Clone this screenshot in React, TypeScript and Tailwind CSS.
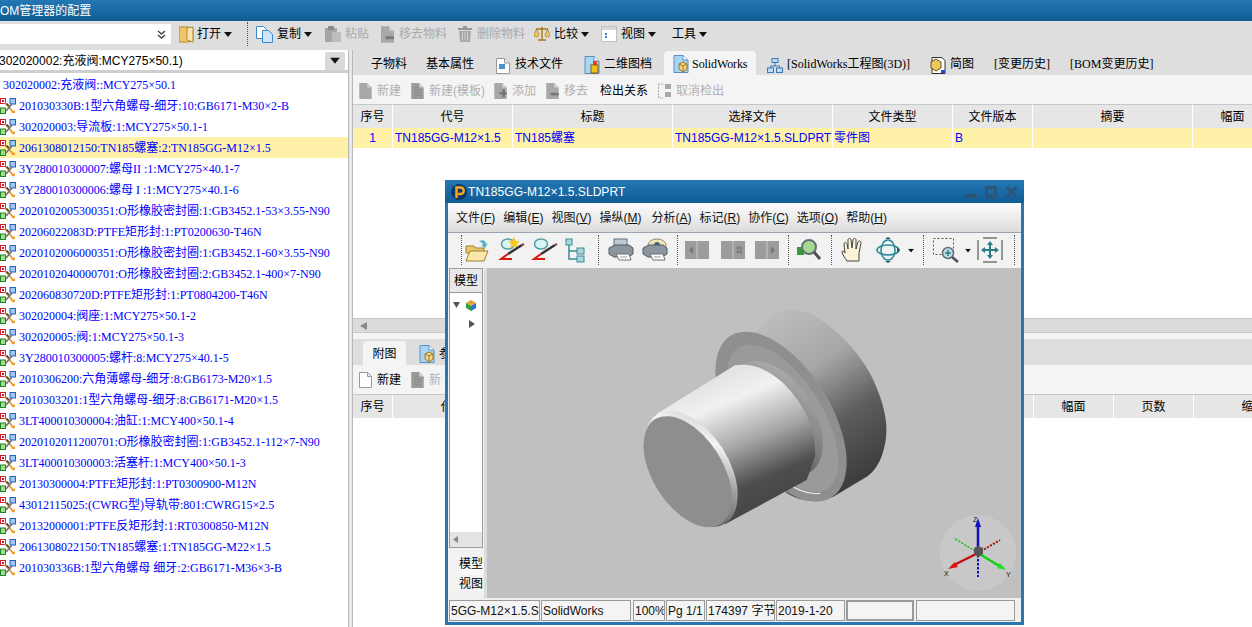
import React from "react";

const CJK = "font-['Liberation_Sans','Noto_Sans_CJK_SC',sans-serif]";
const SERIF = "font-['Liberation_Serif','Noto_Sans_CJK_SC',serif]";

const rows = [
  "201030330B:1型六角螺母-细牙:10:GB6171-M30×2-B",
  "302020003:导流板:1:MCY275×50.1-1",
  "2061308012150:TN185螺塞:2:TN185GG-M12×1.5",
  "3Y280010300007:螺母II :1:MCY275×40.1-7",
  "3Y280010300006:螺母 I :1:MCY275×40.1-6",
  "2020102005300351:O形橡胶密封圈:1:GB3452.1-53×3.55-N90",
  "20206022083D:PTFE矩形封:1:PT0200630-T46N",
  "2020102006000351:O形橡胶密封圈:1:GB3452.1-60×3.55-N90",
  "2020102040000701:O形橡胶密封圈:2:GB3452.1-400×7-N90",
  "202060830720D:PTFE矩形封:1:PT0804200-T46N",
  "302020004:阀座:1:MCY275×50.1-2",
  "302020005:阀:1:MCY275×50.1-3",
  "3Y280010300005:螺杆:8:MCY275×40.1-5",
  "2010306200:六角薄螺母-细牙:8:GB6173-M20×1.5",
  "2010303201:1型六角螺母-细牙:8:GB6171-M20×1.5",
  "3LT400010300004:油缸:1:MCY400×50.1-4",
  "2020102011200701:O形橡胶密封圈:1:GB3452.1-112×7-N90",
  "3LT400010300003:活塞杆:1:MCY400×50.1-3",
  "20130300004:PTFE矩形封:1:PT0300900-M12N",
  "43012115025:(CWRG型)导轨带:801:CWRG15×2.5",
  "20132000001:PTFE反矩形封:1:RT0300850-M12N",
  "2061308022150:TN185螺塞:1:TN185GG-M22×1.5",
  "201030336B:1型六角螺母 细牙:2:GB6171-M36×3-B",
];

function Caret({ className = "" }: { className?: string }) {
  return (
    <svg width="8" height="5" viewBox="0 0 8 5" className={className}>
      <path d="M0 0h8L4 5z" fill="#111" />
    </svg>
  );
}

function TreeIcon() {
  return (
    <svg width="16" height="16" viewBox="0 0 16 16" className="shrink-0">
      <rect x="0.5" y="0.5" width="5" height="5" fill="#fff" stroke="#d02030" />
      <rect x="2" y="2" width="2" height="2" fill="#d02030" />
      <rect x="10" y="0.5" width="5.500" height="5.500" fill="#9fc8f0" stroke="#2a60c0" />
      <rect x="0.5" y="10" width="5" height="5.500" fill="#a0e080" stroke="#208030" />
      <path d="M5 5l9 10" stroke="#e09020" strokeWidth="1.600" />
      <path d="M12 6L6 13" stroke="#707070" strokeWidth="1.600" />
      <path d="M6.500 5.500L9 8" stroke="#404040" strokeWidth="1.600" />
      <path d="M11 15h4v-3z" fill="#f0a030" />
    </svg>
  );
}

function Doc({ c = "#a8a8a8", w = 14, h = 18, minus = false, plus = false, lines = false }: { c?: string; w?: number; h?: number; minus?: boolean; plus?: boolean; lines?: boolean }) {
  return (
    <svg width={w} height={h} viewBox="0 0 14 18" className="shrink-0">
      <path d="M0 0h9l5 5v13H0z" fill={c} />
      <path d="M9 0v5h5z" fill="#d4d4d4" />
      {minus && <rect x="5" y="11" width="9" height="3" fill="#777" />}
      {plus && <path d="M6 10h3V7h3v3h2v3h-2v3H9v-3H6z" fill="#777" />}
      {lines && <path d="M3 5h6M3 8h8M3 11h8M3 14h8" stroke="#8a8a8a" />}
    </svg>
  );
}

function BlueDoc({ cube = false }: { cube?: boolean }) {
  return (
    <svg width="16" height="18" viewBox="0 0 16 18" className="shrink-0">
      <path d="M1 .5h9l5 4.500v12.500H1z" fill="#a9d4f2" stroke="#5a90c0" />
      <path d="M10 .5V5h5" fill="#fff" stroke="#5a90c0" />
      {cube ? (
        <g>
          <path d="M6 9l4-2 4 2v5l-4 3-4-3z" fill="#f0d48c" stroke="#a07820" />
          <path d="M6 9l4 2 4-2M10 11v6" fill="none" stroke="#a07820" />
        </g>
      ) : (
        <g>
          <rect x="7" y="9" width="7" height="8" fill="#f0c020" stroke="#806010" />
          <rect x="9" y="5" width="4" height="4" fill="#e04020" />
        </g>
      )}
    </svg>
  );
}

function WhiteDoc() {
  return (
    <svg width="14" height="16" viewBox="0 0 14 16" className="shrink-0">
      <path d="M.5.500h8l5 4.500v10.500H.5z" fill="#fff" stroke="#9a9a9a" />
      <path d="M8.500.500V5h5" fill="#e8e8e8" stroke="#9a9a9a" />
      <rect x="3" y="6" width="6" height="5" fill="#4f92d0" />
    </svg>
  );
}

function Sep({ h = 26 }: { h?: number }) {
  return <div className="border-l border-dotted border-[#555]" style={{ height: h }} />;
}

function TopToolbar() {
  return (
    <div className={`flex h-[29px] items-center bg-[#dedede] pb-[3px] text-[12px] ${CJK}`}>
      <div className="flex h-[20px] w-[171px] items-center justify-end bg-white pr-[5px]">
        <svg width="9" height="9" viewBox="0 0 9 9">
          <path d="M1 1l3.500 3L8 1M1 5l3.500 3L8 5" fill="none" stroke="#444" strokeWidth="1.400" />
        </svg>
      </div>
      <svg width="15" height="17" viewBox="0 0 15 17" className="ml-[8px]">
        <path d="M0 1h9l5 1v13l-5 1H0z" fill="#f0c468" stroke="#b08a30" />
        <path d="M8 2l6-1v15l-6-2z" fill="#f9e6ac" stroke="#b08a30" />
      </svg>
      <span className="ml-[3px] text-black">打开</span>
      <Caret className="ml-[3px]" />
      <div className="ml-[15px]"><Sep h={24} /></div>
      <svg width="17" height="17" viewBox="0 0 17 17" className="ml-[8px]">
        <path d="M.5.500h7l3 3v9H.5z" fill="#fff" stroke="#3a88d0" />
        <path d="M6.500 4.500h6l4 4v8h-10z" fill="#cfe6fa" stroke="#3a88d0" />
      </svg>
      <span className="ml-[4px] text-black">复制</span>
      <Caret className="ml-[3px]" />
      <svg width="16" height="16" viewBox="0 0 16 16" className="ml-[13px]">
        <rect x="0" y="2" width="12" height="14" fill="#a6a6a6" />
        <rect x="3" y="0" width="6" height="4" fill="#8a8a8a" />
        <rect x="7" y="6" width="9" height="10" fill="#bdbdbd" />
      </svg>
      <span className="ml-[4px] text-[#aaa]">粘贴</span>
      <div className="ml-[12px]"><Doc w={13} h={17} minus /></div>
      <span className="ml-[5px] text-[#aaa]">移去物料</span>
      <svg width="14" height="16" viewBox="0 0 14 16" className="ml-[11px]">
        <path d="M5 0h4v2h5v2H0V2h5z" fill="#999" />
        <path d="M1 5h12l-1 11H2z" fill="#a8a8a8" />
        <path d="M4.500 6.500v8M7 6.500v8M9.500 6.500v8" stroke="#d0d0d0" />
      </svg>
      <span className="ml-[5px] text-[#aaa]">删除物料</span>
      <svg width="16" height="16" viewBox="0 0 16 16" className="ml-[9px]">
        <path d="M8 1v13M2 3h12M4 14h8" stroke="#a87818" strokeWidth="1.400" fill="none" />
        <path d="M0 9l2.500-6L5 9a2.500 2 0 0 1-5 0zM11 9l2.500-6L16 9a2.500 2 0 0 1-5 0z" fill="#efc860" stroke="#a87818" strokeWidth=".7" />
      </svg>
      <span className="ml-[4px] text-black">比较</span>
      <Caret className="ml-[3px]" />
      <svg width="16" height="16" viewBox="0 0 16 16" className="ml-[12px]">
        <rect x=".5" y=".5" width="15" height="15" fill="#fff" stroke="#c0c0c0" />
        <rect x="1" y="1" width="14" height="3" fill="#d8d8d8" />
        <rect x="4" y="7" width="2" height="2" fill="#3a80d0" />
        <rect x="4" y="10" width="2" height="2" fill="#3a80d0" />
      </svg>
      <span className="ml-[4px] text-black">视图</span>
      <Caret className="ml-[3px]" />
      <span className="ml-[16px] text-black">工具</span>
      <Caret className="ml-[3px]" />
    </div>
  );
}

function LeftPanel() {
  return (
    <div className="flex w-[348px] shrink-0 flex-col bg-white">
      <div className={`flex h-[23px] items-center justify-between border-b-[3px] border-[#cfcfcf] pr-[3px] pt-[1px] text-[12px] text-black ${CJK}`}>
        <span className="ml-[-1px]">302020002:充液阀:MCY275×50.1)</span>
        <div className="flex h-[18px] w-[20px] items-center justify-center rounded-[2px] bg-[#d9d9d9]">
          <Caret className="scale-125" />
        </div>
      </div>
      <div className={`flex flex-col pt-[1px] text-[12px] text-[#0000ff] ${SERIF}`}>
        <div className="flex h-[21px] items-center pl-[3px]">302020002:充液阀::MCY275×50.1</div>
        {rows.map((r, i) => (
          <div key={i} className={`flex h-[21px] items-center whitespace-pre ${i === 2 ? "bg-[#fff2a8]" : ""}`}>
            <TreeIcon />
            <span className="ml-[3px]">{r}</span>
          </div>
        ))}
      </div>
    </div>
  );
}

function Tabs() {
  const gap = "ml-[20px]";
  return (
    <div className={`flex h-[25px] items-end bg-[#dedede] text-[12px] text-black ${CJK}`}>
      <span className="mb-[2px] ml-[18px]">子物料</span>
      <span className="mb-[2px] ml-[19px]">基本属性</span>
      <div className="mb-[1px] ml-[22px]"><WhiteDoc /></div>
      <span className="mb-[2px] ml-[5px]">技术文件</span>
      <div className="mb-[1px] ml-[21px]"><BlueDoc /></div>
      <span className="mb-[2px] ml-[4px]">二维图档</span>
      <div className={`ml-[12px] flex h-[24px] w-[92px] items-center rounded-t-[4px] bg-[#f4f4f4] pl-[9px] pt-[1px] ${SERIF}`}>
        <BlueDoc cube />
        <span className="ml-[3px] tracking-[-0.1px]">SolidWorks</span>
      </div>
      <svg width="16" height="15" viewBox="0 0 16 15" className="mb-[2px] ml-[11px]">
        <rect x="5" y=".5" width="6" height="4" fill="#bcdcf6" stroke="#3a78b8" />
        <rect x=".5" y="10" width="6" height="4.500" fill="#bcdcf6" stroke="#3a78b8" />
        <rect x="9.500" y="10" width="6" height="4.500" fill="#bcdcf6" stroke="#3a78b8" />
        <path d="M8 5v3M3.500 10V8h9v2" stroke="#3a78b8" fill="none" />
      </svg>
      <span className={`mb-[2px] ml-[4px] ${SERIF}`}>[SolidWorks工程图(3D)]</span>
      <svg width="16" height="17" viewBox="0 0 16 17" className="mb-[1px] ml-[20px]">
        <path d="M2 .5h10l3 3v13H2z" fill="#fff" stroke="#333" />
        <path d="M1 5l5-3 5 3v6l-5 3-5-3z" fill="#e8c860" stroke="#705010" />
        <path d="M11 13h4v3h-4z" fill="#2050c0" />
      </svg>
      <span className="mb-[2px] ml-[4px]">简图</span>
      <span className={`mb-[2px] ${gap} ${SERIF}`}>[变更历史]</span>
      <span className={`mb-[2px] ${gap} ${SERIF}`}>[BOM变更历史]</span>
    </div>
  );
}

function GrayBar() {
  const t = "text-[#b0b0b0]";
  return (
    <div className={`flex h-[29px] items-center bg-[#f4f4f4] pl-[6px] pt-[2px] text-[12px] ${CJK}`}>
      <Doc w={13} h={16} />
      <span className={`ml-[5px] ${t}`}>新建</span>
      <div className="ml-[10px]"><Doc w={13} h={16} c="#9a9a9a" lines /></div>
      <span className={`ml-[5px] ${t}`}>新建(模板)</span>
      <div className="ml-[9px]"><Doc w={13} h={16} plus /></div>
      <span className={`ml-[5px] ${t}`}>添加</span>
      <div className="ml-[10px]"><Doc w={13} h={16} minus /></div>
      <span className={`ml-[5px] ${t}`}>移去</span>
      <span className="ml-[12px] text-black">检出关系</span>
      <svg width="13" height="16" viewBox="0 0 13 16" className="ml-[10px]">
        <path d="M.5 1h5M.5 1v14h5" fill="none" stroke="#aaa" strokeDasharray="2 1" />
        <rect x="7" y="1" width="6" height="5" fill="#a8a8a8" />
        <rect x="7" y="9" width="6" height="5" fill="#a8a8a8" />
      </svg>
      <span className={`ml-[5px] ${t}`}>取消检出</span>
    </div>
  );
}

const cols: [string, number][] = [
  ["序号", 40], ["代号", 120], ["标题", 160], ["选择文件", 160], ["文件类型", 120], ["文件版本", 80], ["摘要", 160], ["幅面", 80],
];

function HeaderRow({ items }: { items: [string, number][] }) {
  return (
    <div className={`flex h-[24px] border-t border-[#c8c8c8] bg-[#e6e6e6] text-[12px] text-black ${CJK}`}>
      {items.map(([n, w], i) => (
        <div key={i} style={{ width: w }} className="flex shrink-0 items-center justify-center whitespace-nowrap border-r border-white">{n}</div>
      ))}
    </div>
  );
}

function UpperTable() {
  const row: [string, number, string][] = [
    ["1", 40, "justify-center"],
    ["TN185GG-M12×1.5", 120, "pl-[2px]"],
    ["TN185螺塞", 160, "pl-[2px]"],
    ["TN185GG-M12×1.5.SLDPRT", 160, "pl-[2px]"],
    ["零件图", 120, "pl-[1px]"],
    ["B", 80, "pl-[2px]"],
    ["", 160, ""],
    ["", 80, ""],
  ];
  return (
    <div className="flex h-[214px] flex-col bg-white">
      <HeaderRow items={cols} />
      <div className={`flex h-[20px] bg-[#fff2a8] text-[12px] text-[#0000ff] ${CJK}`}>
        {row.map(([n, w, c], i) => (
          <div key={i} style={{ width: w }} className={`flex shrink-0 items-center overflow-hidden whitespace-nowrap border-r border-white ${c}`}>{n}</div>
        ))}
      </div>
    </div>
  );
}

function RightPanel() {
  return (
    <div className="flex min-w-0 flex-1 flex-col overflow-hidden bg-white">
      <Tabs />
      <GrayBar />
      <UpperTable />
      <div className="flex h-[15px] items-center border-y border-[#c8c8c8] bg-[#dcdcdc] pl-[7px]">
        <svg width="7" height="8" viewBox="0 0 7 8"><path d="M7 0v8L0 4z" fill="#888" /></svg>
      </div>
      <div className="h-[6px] bg-[#f4f4f4]" />
      <div className={`flex h-[26px] items-end bg-[#dedede] pl-[10px] text-[12px] text-black ${CJK}`}>
        <div className="flex h-[24px] w-[43px] items-center justify-center rounded-t-[4px] bg-[#f4f4f4] pt-[2px]">附图</div>
        <div className="mb-[2px] ml-[13px]"><BlueDoc cube /></div>
        <span className="mb-[2px] ml-[4px]">参</span>
      </div>
      <div className={`flex h-[29px] items-center bg-[#f4f4f4] pl-[6px] pt-[1px] text-[12px] ${CJK}`}>
        <svg width="13" height="16" viewBox="0 0 13 16">
          <path d="M.5.500h8l4 4v11H.5z" fill="#fff" stroke="#999" />
          <path d="M8.500.500v4h4" fill="none" stroke="#999" />
        </svg>
        <span className="ml-[5px] text-black">新建</span>
        <div className="ml-[10px]"><Doc w={13} h={16} c="#9a9a9a" lines /></div>
        <span className="ml-[5px] text-[#b0b0b0]">新</span>
      </div>
      <HeaderRow items={[["序号", 40], ["代号", 120], ["", 521], ["幅面", 80], ["页数", 80], ["缩", 108]]} />
    </div>
  );
}

function Model() {
  return (
    <svg width="280" height="280" viewBox="0 0 840 840" className="absolute left-[133px] top-[22px]">
      <defs>
        <linearGradient id="rim" gradientUnits="userSpaceOnUse" x1="480" y1="60" x2="790" y2="540">
          <stop offset="0" stopColor="#bdbdbd" />
          <stop offset="0.35" stopColor="#a6a6a6" />
          <stop offset="0.65" stopColor="#5e5e5e" />
          <stop offset="1" stopColor="#3a3a3a" />
        </linearGradient>
        <linearGradient id="body" gradientUnits="userSpaceOnUse" x1="300" y1="260" x2="450" y2="620">
          <stop offset="0" stopColor="#e4e4e4" />
          <stop offset="0.2" stopColor="#f1f1f1" />
          <stop offset="0.55" stopColor="#a4a4a4" />
          <stop offset="0.85" stopColor="#4e4e4e" />
          <stop offset="1" stopColor="#484848" />
        </linearGradient>
        <linearGradient id="bevel" gradientUnits="userSpaceOnUse" x1="130" y1="350" x2="350" y2="700">
          <stop offset="0" stopColor="#b8b8b8" />
          <stop offset="0.25" stopColor="#f4f4f4" />
          <stop offset="0.5" stopColor="#a0a0a0" />
          <stop offset="0.85" stopColor="#555555" />
          <stop offset="1" stopColor="#2e2e2e" />
        </linearGradient>
        <linearGradient id="neck" gradientUnits="userSpaceOnUse" x1="450" y1="240" x2="610" y2="500">
          <stop offset="0" stopColor="#a8a8a8" />
          <stop offset="0.6" stopColor="#7a7a7a" />
          <stop offset="1" stopColor="#4a4a4a" />
        </linearGradient>
      </defs>
      <path d="M292 240L470 65Q520 50 570 70Q680 130 750 250Q810 370 797 450Q785 530 740 560L640 620Q570 650 500 610Z" fill="url(#rim)" />
      <ellipse cx="483" cy="380" rx="286" ry="148" transform="rotate(58 483 380)" fill="#8f8f8f" />
      <ellipse cx="490" cy="378" rx="262" ry="132" transform="rotate(58 490 378)" fill="#8f8f8f" stroke="#f0f0f0" strokeWidth="3" strokeDasharray="470 1200" strokeDashoffset="-30" />
      <ellipse cx="488" cy="385" rx="250" ry="120" transform="rotate(58 488 385)" fill="#9a9a9a" />
      <ellipse cx="470" cy="385" rx="190" ry="112" transform="rotate(58 470 385)" fill="url(#neck)" />
      <path d="M111 371L345 226Q420 215 490 280Q590 380 585 500L560 570L315 703Z" fill="url(#body)" />
      <ellipse cx="213" cy="537" rx="193" ry="113" transform="rotate(58 213 537)" fill="url(#bevel)" />
      <ellipse cx="203" cy="545" rx="185" ry="105" transform="rotate(58 203 545)" fill="#8e8e8e" />
    </svg>
  );
}

function Triad() {
  return (
    <svg width="80" height="80" viewBox="0 0 80 80" className="absolute left-[451px] top-[245px]">
      <circle cx="40" cy="40" r="38" fill="#c8c8c8" />
      <path d="M40 40V12" stroke="#1010b0" strokeWidth="2.500" />
      <path d="M40 5l-3 9h6z" fill="#1010c0" />
      <path d="M40 42v22" stroke="#1010b0" strokeWidth="2" strokeDasharray="2.500 1.500" />
      <path d="M40 40L14 53" stroke="#c01010" strokeWidth="2.500" />
      <path d="M10 56l7-7 3 5z" fill="#e01010" />
      <path d="M40 40l22-13" stroke="#a01010" strokeWidth="2" strokeDasharray="2 1.500" />
      <path d="M40 40l23 14" stroke="#10d010" strokeWidth="2.500" />
      <path d="M68 57l-9-2 3-5z" fill="#20e020" />
      <path d="M40 40L16 25" stroke="#10c010" strokeWidth="1.500" strokeDasharray="2 1.500" />
      <path d="M36 35l4-2 5 2v6l-5 3-4-3z" fill="#555" />
      <text x="35" y="9" fontSize="7" fill="#111" fontFamily="Liberation Sans">Z</text>
      <text x="6" y="63" fontSize="7" fill="#111" fontFamily="Liberation Sans">X</text>
      <text x="68" y="64" fontSize="7" fill="#111" fontFamily="Liberation Sans">Y</text>
    </svg>
  );
}

function M({ a, k, className = "" }: { a: string; k: string; className?: string }) {
  return (
    <span className={className}>
      {a}(<u>{k}</u>)
    </span>
  );
}

function PageBtn({ kind }: { kind: "l" | "m" | "r" }) {
  return (
    <svg width="24" height="18" viewBox="0 0 24 18">
      <rect width="24" height="18" fill="#9c9c9c" />
      <path d="M12 0v18" stroke="#c8c8c8" />
      {kind === "l" && <path d="M8 5v8L4 9z" fill="#777" />}
      {kind === "m" && <path d="M15 7h6M15 11h6M17 5v8M20 5v8" stroke="#777" />}
      {kind === "r" && <path d="M16 5v8l4-4z" fill="#777" />}
    </svg>
  );
}

function Pen({ star = false }: { star?: boolean }) {
  return (
    <svg width="28" height="26" viewBox="0 0 28 26">
      <ellipse cx="10" cy="7" rx="6.500" ry="5" fill="#d8f4f4" stroke="#50a0a0" strokeWidth="1.500" />
      {star && <path d="M16 0l2 4 4 0-3 3 1 4-4-2-4 2 1-4-3-3 4 0z" fill="#f8c820" />}
      <path d="M10 17L24 8" stroke="#333" strokeWidth="2.500" />
      <path d="M24 8l2-1" stroke="#a04040" strokeWidth="2.500" />
      <path d="M10 17l-7 5h11" fill="none" stroke="#d81808" strokeWidth="2" />
    </svg>
  );
}

function Printer({ eye = false }: { eye?: boolean }) {
  return (
    <svg width="26" height="24" viewBox="0 0 26 24">
      {eye && <ellipse cx="15" cy="7" rx="9" ry="6" fill="#f0e8b8" stroke="#8a8a70" />}
      {eye && <circle cx="15" cy="7" r="3" fill="#406878" />}
      {!eye && <rect x="6" y="1" width="13" height="7" fill="#c0c8d0" stroke="#607080" />}
      <path d="M1 10l6-3h14l4 3v6l-5 3H6l-5-3z" fill="#8c969e" stroke="#505a62" />
      <path d="M8 16h13l2 6H11z" fill="#fff" stroke="#707070" />
      <path d="M12 19h7" stroke="#999" />
    </svg>
  );
}

function WinToolbar() {
  return (
    <div className="flex h-[36px] shrink-0 items-center bg-[#f2f2f2] shadow-[inset_0_1px_0_#9aa4ae]">
      <div className="ml-[13px]"><Sep h={30} /></div>
      <svg width="26" height="25" viewBox="0 0 26 25" className="ml-[1px]">
        <path d="M16 3c4-2 7 0 7 3l2-1-3 5-4-3 2 0c0-2-2-3-4-4z" fill="#50b0c8" />
        <path d="M3 8h8l2 2h8v5H3z" fill="#e8c868" stroke="#a08030" />
        <path d="M3 23L7 13h18l-4 10z" fill="#fbe8a8" stroke="#a08030" />
      </svg>
      <div className="ml-[9px]"><Pen star /></div>
      <div className="ml-[5px]"><Pen /></div>
      <svg width="20" height="25" viewBox="0 0 20 25" className="ml-[6px]">
        <rect x="1" y="1" width="6" height="6" fill="#a8d8dc" stroke="#3a8a96" />
        <rect x="12" y="10" width="7" height="6" fill="#a8d8dc" stroke="#3a8a96" />
        <rect x="12" y="18" width="7" height="6" fill="#a8d8dc" stroke="#3a8a96" />
        <path d="M4 7v14h8M4 13h8" fill="none" stroke="#3a8a96" strokeWidth="1.500" />
      </svg>
      <div className="ml-[13px]"><Sep h={30} /></div>
      <div className="ml-[9px]"><Printer /></div>
      <div className="ml-[8px]"><Printer eye /></div>
      <div className="ml-[9px]"><Sep h={30} /></div>
      <div className="ml-[7px]"><PageBtn kind="l" /></div>
      <div className="ml-[12px]"><PageBtn kind="m" /></div>
      <div className="ml-[10px]"><PageBtn kind="r" /></div>
      <div className="ml-[9px]"><Sep h={30} /></div>
      <svg width="26" height="24" viewBox="0 0 26 24" className="ml-[7px]">
        <rect x="1" y="9" width="7" height="8" fill="#3a9a3a" />
        <circle cx="13" cy="9" r="7" fill="#a8d890" stroke="#607078" strokeWidth="2" />
        <path d="M18 14l6 7" stroke="#505050" strokeWidth="3" />
      </svg>
      <div className="ml-[9px]"><Sep h={30} /></div>
      <svg width="24" height="25" viewBox="0 0 24 25" className="ml-[9px]">
        <path d="M6 23c-2-3-5-7-5-9s2-1 3 1L3 6c0-2 2-2 3 0l1 5 0-9c0-2 3-2 3 0l1 8 1-8c0-2 3-2 3 0l0 9 2-7c1-2 3-1 3 1l-2 10 0 8z" fill="#fbf4d8" stroke="#444" />
      </svg>
      <svg width="24" height="26" viewBox="0 0 24 26" className="ml-[11px]">
        <ellipse cx="12" cy="13" rx="7" ry="10" fill="none" stroke="#2a8a96" strokeWidth="1.500" />
        <ellipse cx="12" cy="13" rx="11" ry="5" fill="none" stroke="#2a8a96" strokeWidth="1.500" />
        <path d="M9 2h6l-3-2zM9 24h6l-3 2zM21 10l3 3-3 3z" fill="#1a5a66" />
      </svg>
      <Caret className="ml-[7px] scale-75" />
      <div className="ml-[8px]"><Sep h={30} /></div>
      <svg width="26" height="25" viewBox="0 0 26 25" className="ml-[9px]">
        <rect x=".5" y=".5" width="20" height="16" fill="none" stroke="#555" strokeDasharray="2 2" />
        <circle cx="15" cy="15" r="5.500" fill="#c0e0e8" stroke="#607078" strokeWidth="1.500" />
        <path d="M12 15h6M15 12v6" stroke="#2a7a86" strokeWidth="1.500" />
        <path d="M19 19l6 5" stroke="#505050" strokeWidth="2.500" />
      </svg>
      <Caret className="ml-[5px] scale-75" />
      <svg width="26" height="26" viewBox="0 0 26 26" className="ml-[5px]">
        <path d="M1 3v20M25 3v20" stroke="#777" strokeWidth="1.500" />
        <path d="M6 1h14M6 25h14" stroke="#777" strokeWidth="1.500" />
        <path d="M13 4l3 4h-2v4h4v-2l4 3-4 3v-2h-4v4h2l-3 4-3-4h2v-4H8v2l-4-3 4-3v2h4V8h-2z" fill="#2a7a8a" />
      </svg>
      <div className="ml-[11px]"><Sep h={30} /></div>
    </div>
  );
}

function Window() {
  const field = "flex h-[21px] shrink-0 items-center overflow-hidden whitespace-nowrap border border-[#9a9a9a] bg-[#f4f4f4] px-[1px]";
  return (
    <div className={`absolute left-[445px] top-[180px] flex h-[445px] w-[579px] flex-col border-[3px] border-t-0 border-[#2a76b0] bg-white ${CJK}`}>
      <div className="mx-[-3px] flex h-[23px] shrink-0 items-center bg-gradient-to-b from-[#2478b4] to-[#0f5c94] pl-[6px] pr-[6px] text-[12px] text-white">
        <svg width="16" height="16" viewBox="0 0 16 16">
          <circle cx="8" cy="8" r="8" fill="#0c3a68" />
          <path d="M5.500 14V3.500h4a3 3 0 0 1 0 6.500H7" fill="none" stroke="#f4a820" strokeWidth="2.500" />
        </svg>
        <span className="ml-[1px] tracking-[0.05px]">TN185GG-M12×1.5.SLDPRT</span>
        <div className="ml-auto flex items-center gap-[8px]">
          <div className="mt-[8px] h-[4px] w-[12px] bg-[#2c5678]" />
          <div className="h-[12px] w-[12px] border-[3px] border-[#2c5678]" />
          <svg width="13" height="12" viewBox="0 0 13 12"><path d="M1.500 1l10 10M11.500 1l-10 10" stroke="#2c5678" strokeWidth="3" /></svg>
        </div>
      </div>
      <div className="flex h-[29px] shrink-0 items-center gap-[8px] bg-gradient-to-b from-[#fdfdfd] to-[#dcdcdc] pl-[8px] text-[12px] text-[#111]">
        <M a="文件" k="F" /><M a="编辑" k="E" /><M a="视图" k="V" /><M a="操纵" k="M" className="pr-[2px]" /><M a="分析" k="A" /><M a="标记" k="R" /><M a="协作" k="C" /><M a="选项" k="O" /><M a="帮助" k="H" />
      </div>
      <WinToolbar />
      <div className="flex min-h-0 flex-1">
        <div className="flex w-[39px] shrink-0 flex-col border-r-[3px] border-[#dcdcdc] bg-[#f2f2f2] pl-[1px] text-[12px] text-black">
          <div className="flex h-[25px] w-[34px] items-center justify-center whitespace-nowrap border border-[#9a9a9a] bg-[#e8e8e8]">模型</div>
          <div className="flex h-[255px] w-[34px] flex-col border-x border-b border-[#9a9a9a] bg-white">
            <div className="flex h-[20px] items-center pl-[3px] pt-[3px]">
              <svg width="7" height="6" viewBox="0 0 7 6"><path d="M0 0h7L3.500 6z" fill="#555" /></svg>
              <svg width="12" height="12" viewBox="0 0 12 12" className="ml-[5px]">
                <path d="M1 4l5-3 5 3-5 3z" fill="#e8a030" />
                <path d="M1 4v5l5 3V7z" fill="#30a040" />
                <path d="M11 4v5l-5 3V7z" fill="#3070d0" />
              </svg>
            </div>
            <div className="flex h-[22px] items-center pl-[19px]">
              <svg width="6" height="8" viewBox="0 0 6 8"><path d="M0 0l6 4-6 4z" fill="#555" /></svg>
            </div>
            <div className="mt-auto flex h-[15px] items-center bg-[#e4e4e4] pl-[3px]">
              <svg width="5" height="7" viewBox="0 0 5 7"><path d="M5 0v7L0 3.500z" fill="#888" /></svg>
            </div>
          </div>
          <div className="flex flex-1 flex-col items-end overflow-hidden pt-[9px] leading-[14px]">
            <div className="h-[18px] w-[25px] overflow-hidden whitespace-nowrap rounded-b-[3px] bg-[#f8f8f8]">模型</div>
            <div className="mt-[2px] h-[16px] w-[25px] overflow-hidden whitespace-nowrap">视图</div>
          </div>
        </div>
        <div className="relative min-w-0 flex-1 bg-[#c0c0c0]">
          <Model />
          <Triad />
        </div>
      </div>
      <div className="flex h-[24px] shrink-0 items-start gap-[1px] bg-[#f0f0f0] pl-[1px] pt-[2px] text-[12px] text-[#111]">
        <div className={`${field} w-[91px]`}>5GG-M12×1.5.SL</div>
        <div className={`${field} w-[90px]`}>SolidWorks</div>
        <div className={`${field} ml-[1px] w-[32px]`}>100%</div>
        <div className={`${field} w-[39px]`}>Pg 1/1</div>
        <div className={`${field} w-[69px]`}>174397 字节</div>
        <div className={`${field} w-[69px]`}>2019-1-20</div>
        <div className={`${field} w-[68px] border-2`} />
        <div className={`${field} ml-[1px] w-[99px]`} />
      </div>
    </div>
  );
}

export default function App() {
  return (
    <div className="relative flex h-[627px] w-[1252px] flex-col overflow-hidden bg-white">
      <div className={`flex h-[21px] items-center overflow-hidden bg-gradient-to-b from-[#2478b4] to-[#0f5c94] text-[12px] text-white ${CJK}`}>
        <span className="whitespace-nowrap">OM管理器的配置</span>
      </div>
      <TopToolbar />
      <div className="flex min-h-0 flex-1">
        <LeftPanel />
        <div className="w-[5px] shrink-0 border-x border-[#b8b8b8] bg-[#e8e8e8]" />
        <RightPanel />
      </div>
      <Window />
    </div>
  );
}
